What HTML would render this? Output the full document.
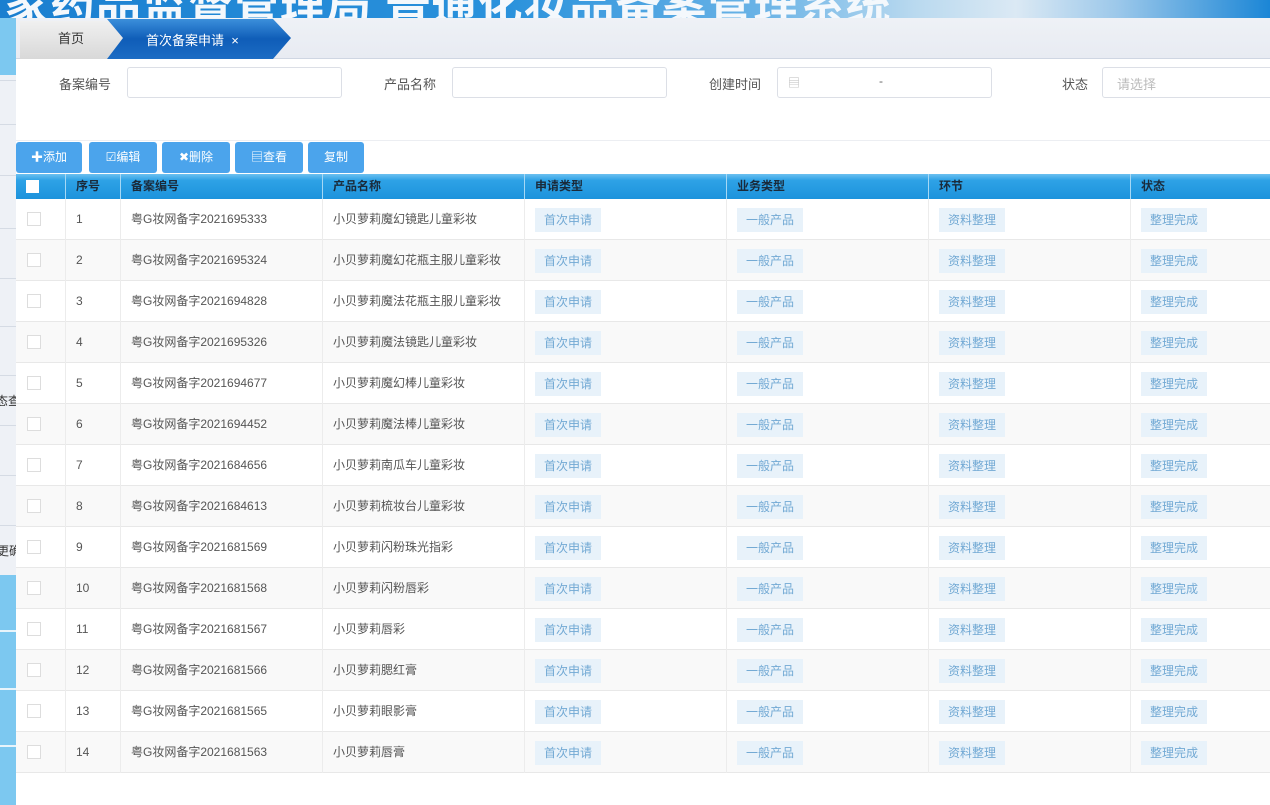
<!DOCTYPE html>
<html><head><meta charset="utf-8"><style>
*{margin:0;padding:0;box-sizing:border-box}
body{width:1270px;height:805px;overflow:hidden;background:#fff;font-family:"Liberation Sans","Noto Sans CJK SC",sans-serif;font-size:13px;color:#555;position:relative}
.banner{position:absolute;left:0;top:0;width:1270px;height:18px;overflow:hidden;background:linear-gradient(90deg,#1a7fd0 0%,#2a92dc 40%,#6ab3e6 60%,#b9d9ef 72%,#dbe9f4 80%,#9cc8ea 88%,#1b86d6 100%)}
.banner span{position:absolute;left:-42px;top:-20px;font-size:45px;font-weight:bold;color:#f4f8fc;white-space:nowrap;letter-spacing:1px;line-height:52px}
.strip{position:absolute;left:0;top:18px;width:16px;height:787px;background:#eef1f6}
.strip div{position:absolute;left:0;width:16px}
.tabs{position:absolute;left:16px;top:18px;width:1254px;height:41px;background:linear-gradient(#eef1f6,#e8ebf2);border-bottom:1px solid #cfd6e2}
.t1{position:absolute;left:4px;top:3px;width:110px;height:38px;background:linear-gradient(#f0f0f0,#d8d8d8);color:#333;font-size:13px;line-height:36px;padding-left:38px}
.t2{position:absolute;left:91px;top:0;width:184px;height:41px}
.t2 span{position:absolute;left:39px;top:12px;color:#fff;font-size:13px}
.lbl{position:absolute;top:74px;font-size:13px;color:#555}
.inp{position:absolute;top:67px;height:31px;border:1px solid #dcdfe6;border-radius:3px;background:#fff}
.hr{position:absolute;left:16px;top:140px;width:1254px;height:1px;background:#eceef2}
.btn{position:absolute;top:142px;height:31px;background:#4ba4ec;border-radius:3px;color:#fff;font-size:12px;line-height:31px;text-align:center}
.th{position:absolute;left:16px;top:174px;width:1254px;height:25px;background:linear-gradient(#6cc0f0 0%,#2ea2e6 25%,#1d93dc 100%)}
.th div{position:absolute;top:0;height:25px;line-height:24px;font-size:12px;font-weight:bold;color:#1a2a3a;border-left:1px solid #a6d8f5;padding-left:10px}
.row{position:absolute;left:16px;width:1254px;height:41px;border-bottom:1px solid #e8e8e8}
.row div{position:absolute;top:0;height:41px;line-height:40px;font-size:12px;color:#555;border-left:1px solid #ececec;padding-left:10px}
.tag{display:inline-block;background:#e8f2fa;color:#72a9d4;height:24px;line-height:24px;padding:0 9px;margin-top:9px;vertical-align:top}
.cb{position:absolute;left:11px;top:13px;width:14px;height:14px;border:1px solid #ddd;background:#fff}
</style></head><body>
<div class="banner"><span>国家药品监督管理局 普通化妆品备案管理系统</span></div>
<div class="strip">
<div style="top:0;height:57px;background:#7cc8f0"></div>
<div style="top:62px;height:1px;background:#d5dbe4"></div>
<div style="top:106px;height:1px;background:#d5dbe4"></div>
<div style="top:157px;height:1px;background:#d5dbe4"></div>
<div style="top:210px;height:1px;background:#d5dbe4"></div>
<div style="top:260px;height:1px;background:#d5dbe4"></div>
<div style="top:308px;height:1px;background:#d5dbe4"></div>
<div style="top:357px;height:1px;background:#d5dbe4"></div>
<div style="top:407px;height:1px;background:#d5dbe4"></div>
<div style="top:457px;height:1px;background:#d5dbe4"></div>
<div style="top:507px;height:1px;background:#d5dbe4"></div>
<div style="top:374px;left:-4px;font-size:12px;color:#333;width:24px;overflow:hidden;white-space:nowrap">态查</div>
<div style="top:524px;left:-3px;font-size:12px;color:#333;width:24px;overflow:hidden;white-space:nowrap">更确</div>
<div style="top:557px;height:230px;background:#7cc8f0"></div>
<div style="top:612px;height:2px;background:#e8f4fb"></div>
<div style="top:670px;height:2px;background:#e8f4fb"></div>
<div style="top:727px;height:2px;background:#e8f4fb"></div>
</div>
<div class="tabs">
<div class="t1">首页</div>
<div class="t2"><svg width="184" height="41" style="position:absolute;left:0;top:0"><defs><linearGradient id="g" x1="0" y1="0" x2="0" y2="1"><stop offset="0" stop-color="#3b8fdb"/><stop offset="0.5" stop-color="#0f5db8"/><stop offset="1" stop-color="#1c6cc4"/></linearGradient></defs><polygon points="0,41 16,20 0,1 166,1 184,20 166,41" fill="url(#g)"/></svg><span>首次备案申请 &nbsp;×</span></div>
</div>
<div class="lbl" style="left:59px">备案编号</div>
<div class="inp" style="left:127px;width:215px"></div>
<div class="lbl" style="left:384px">产品名称</div>
<div class="inp" style="left:452px;width:215px"></div>
<div class="lbl" style="left:709px">创建时间</div>
<div class="inp" style="left:777px;width:215px"><span style="position:absolute;left:10px;top:6px;color:#bbb;font-size:12px">▤</span><span style="position:absolute;left:101px;top:6px;color:#666;font-size:12px">-</span></div>
<div class="lbl" style="left:1062px">状态</div>
<div class="inp" style="left:1102px;width:180px"><span style="position:absolute;left:14px;top:6px;color:#bbb;font-size:13px">请选择</span></div>
<div class="hr"></div>
<div class="btn" style="left:16px;width:66px">✚添加</div>
<div class="btn" style="left:89px;width:68px">☑编辑</div>
<div class="btn" style="left:162px;width:68px">✖删除</div>
<div class="btn" style="left:235px;width:68px">▤查看</div>
<div class="btn" style="left:308px;width:56px">复制</div>
<div class="th">
<div style="left:0;border-left:none;width:49px"><span style="display:inline-block;width:13px;height:13px;background:#fff;margin-top:6px;vertical-align:top"></span></div>
<div style="left:49px;width:55px">序号</div>
<div style="left:104px;width:202px">备案编号</div>
<div style="left:306px;width:202px">产品名称</div>
<div style="left:508px;width:202px">申请类型</div>
<div style="left:710px;width:202px">业务类型</div>
<div style="left:912px;width:202px">环节</div>
<div style="left:1114px;width:140px">状态</div>
</div>
<div id="rows"></div>
<script>
var d=[["2021695333","小贝萝莉魔幻镜匙儿童彩妆"],["2021695324","小贝萝莉魔幻花瓶主服儿童彩妆"],["2021694828","小贝萝莉魔法花瓶主服儿童彩妆"],["2021695326","小贝萝莉魔法镜匙儿童彩妆"],["2021694677","小贝萝莉魔幻棒儿童彩妆"],["2021694452","小贝萝莉魔法棒儿童彩妆"],["2021684656","小贝萝莉南瓜车儿童彩妆"],["2021684613","小贝萝莉梳妆台儿童彩妆"],["2021681569","小贝萝莉闪粉珠光指彩"],["2021681568","小贝萝莉闪粉唇彩"],["2021681567","小贝萝莉唇彩"],["2021681566","小贝萝莉腮红膏"],["2021681565","小贝萝莉眼影膏"],["2021681563","小贝萝莉唇膏"]];
var h="";
for(var i=0;i<d.length;i++){
h+='<div class="row" style="top:'+(199+i*41)+'px;background:'+(i%2?'#f9f9f9':'#fff')+'"><span class="cb"></span>'+
'<div style="left:49px;width:55px">'+(i+1)+'</div>'+
'<div style="left:104px;width:202px">粤G妆网备字'+d[i][0]+'</div>'+
'<div style="left:306px;width:202px">'+d[i][1]+'</div>'+
'<div style="left:508px;width:202px"><span class="tag">首次申请</span></div>'+
'<div style="left:710px;width:202px"><span class="tag">一般产品</span></div>'+
'<div style="left:912px;width:202px"><span class="tag">资料整理</span></div>'+
'<div style="left:1114px;width:140px"><span class="tag">整理完成</span></div></div>';
}
document.getElementById("rows").innerHTML=h;
</script>
</body></html>
